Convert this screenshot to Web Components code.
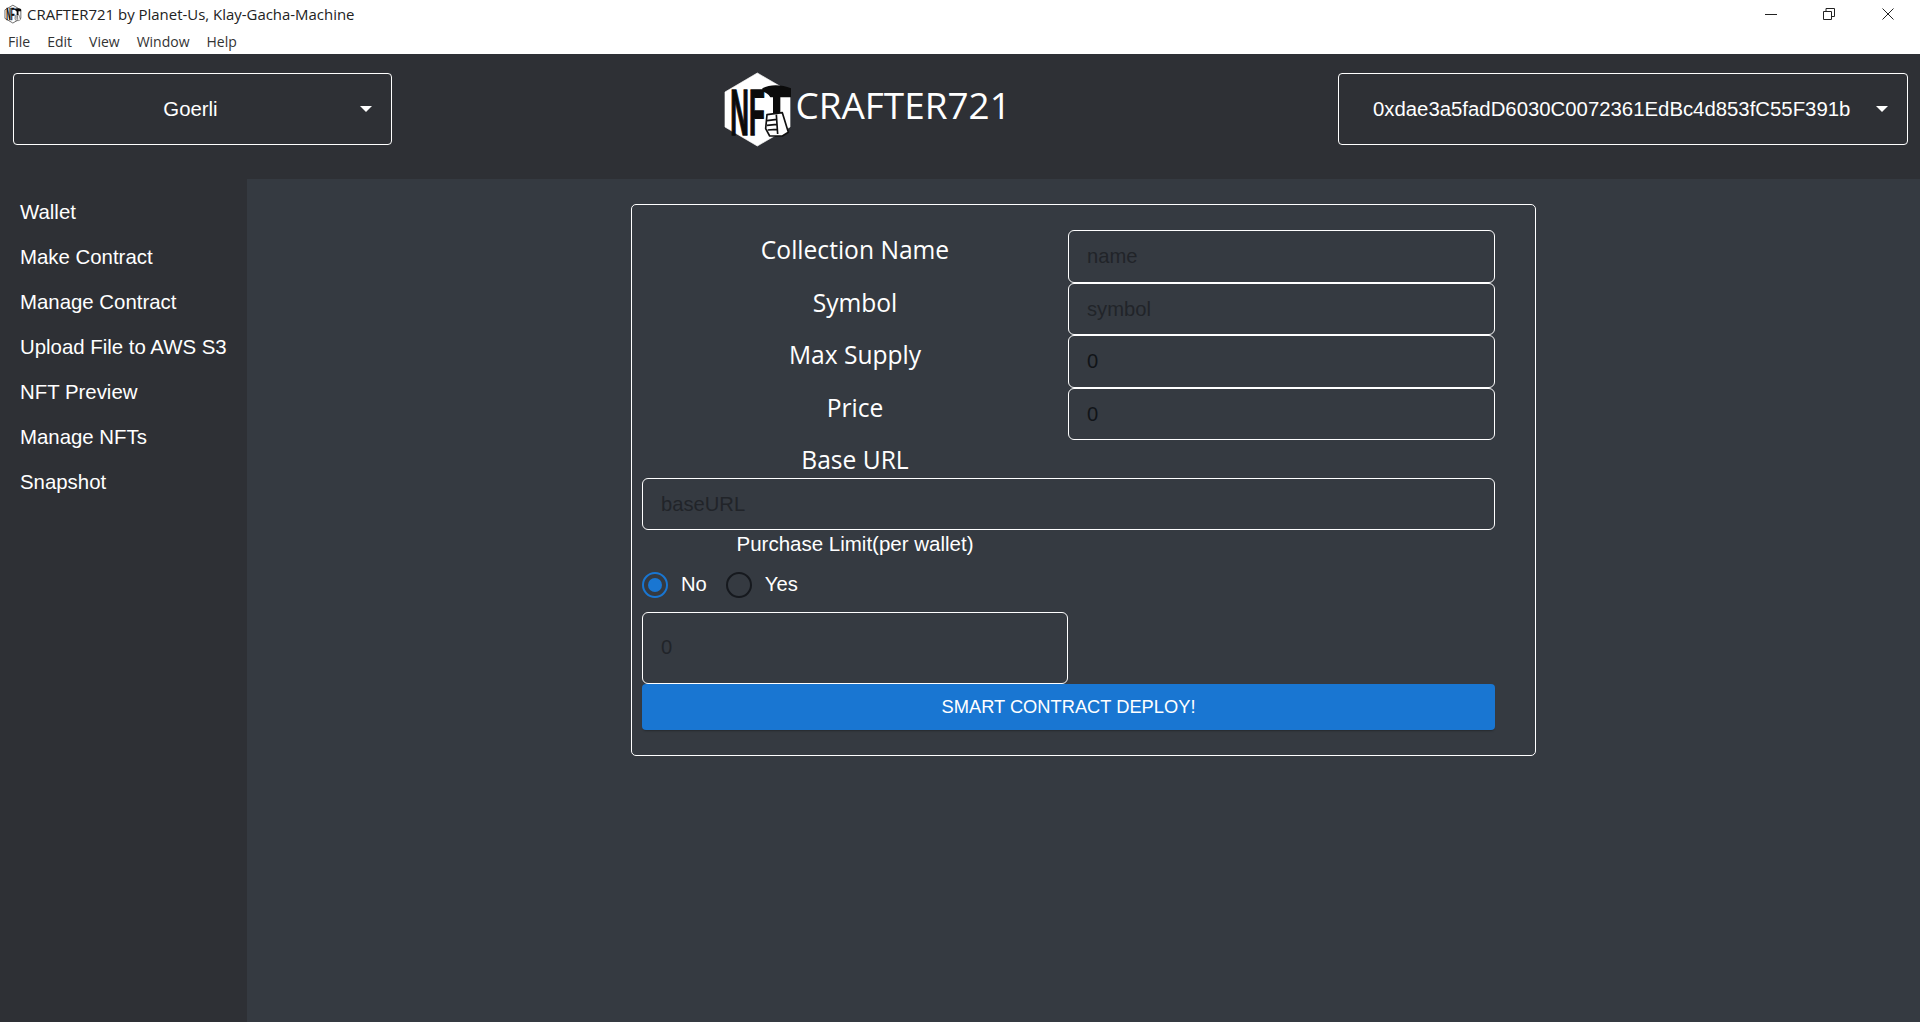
<!DOCTYPE html>
<html lang="en"><head><meta charset="utf-8"><title>CRAFTER721</title>
<style>
html,body{margin:0;height:100%;background:#353a41;overflow:hidden}
body{font-family:"Liberation Sans",Arial,sans-serif}
</style></head><body>
<crafter-app></crafter-app>
<script>
const logoSvg = (hexFill, hexStroke, sw) => `
<svg viewBox="0 0 270 270" width="100%" height="100%" xmlns="http://www.w3.org/2000/svg">
<polygon points="121,27 219,84 219,189 121,246 24,189 24,84" fill="${hexFill}" stroke="${hexStroke}" stroke-width="${sw}" stroke-linejoin="round"/>
<text transform="translate(40 213) scale(0.4 1)" font-family="Liberation Sans" font-weight="700" font-size="194" fill="#0b0b0b" stroke="#0b0b0b" stroke-width="5">NF</text>
<path d="M136 73 C160 60 195 62 222 73 L222 100 L190 100 L190 150 L168 150 L168 100 L160 100 C154 90 146 84 136 84Z" fill="#0b0b0b"/>
<path d="M150 152 L196 146 L214 205 L196 216 L158 216 L146 194Z" fill="#fff" stroke="#111" stroke-width="5" stroke-linejoin="round"/>
<path d="M150 170 L180 166M150 184 L180 181M152 198 L180 196M178 152 L182 210" stroke="#111" stroke-width="5" fill="none"/>
</svg>`;

class CrafterTitlebar extends HTMLElement{constructor(){super();this.attachShadow({mode:'open'}).innerHTML=`
<style>
:host{display:block;height:54px;background:#fff;color:#222;font-family:"Open Sans","Noto Sans",sans-serif}
.top{display:flex;align-items:center;height:28px;padding-left:3px}
.ico{width:22px;height:22px;flex:none;margin-right:2px}
.t{font-size:14.95px;white-space:nowrap;flex:1}
.ctl{display:flex;height:28px;flex:none;margin-right:3px}
.ctl span{display:flex;width:58.5px;align-items:center;justify-content:center}
.menu{display:flex;height:26px;align-items:center;padding-left:8px;font-size:14px;color:#333;gap:17px}
svg{display:block}
</style>
<div class="top"><span class="ico">${logoSvg('#fff','#222',8)}</span><span class="t"><slot></slot></span>
<div class="ctl">
<span><svg width="12" height="12" viewBox="0 0 12 12"><path d="M0 6.5H12" stroke="#222" stroke-width="1"/></svg></span>
<span><svg width="12" height="12" viewBox="0 0 12 12"><path d="M.5 3.5h8v8h-8zM3 3.5V.5h8.5v8H8.5" stroke="#222" fill="none"/></svg></span>
<span><svg width="12" height="12" viewBox="0 0 12 12"><path d="M.5.5l11 11M11.5.5l-11 11" stroke="#222" fill="none"/></svg></span>
</div></div>
<div class="menu"><span>File</span><span>Edit</span><span>View</span><span>Window</span><span>Help</span></div>`}}
customElements.define('crafter-titlebar',CrafterTitlebar);

class CrafterSelect extends HTMLElement{constructor(){super();this.attachShadow({mode:'open'}).innerHTML=`
<style>
:host{display:flex;box-sizing:border-box;height:72px;border:1px solid #fff;border-radius:4px;align-items:center;color:#fff;font-size:20.35px;padding:0 19px 0 34px}
.v{flex:1;text-align:center;white-space:nowrap;min-width:0}
.a{width:0;height:0;flex:none;border-left:6px solid transparent;border-right:6px solid transparent;border-top:6px solid #fff;margin-left:27px}
</style><div class="v"><slot></slot></div><i class="a"></i>`}}
customElements.define('crafter-select',CrafterSelect);

class CrafterLogo extends HTMLElement{constructor(){super();this.attachShadow({mode:'open'}).innerHTML=`
<style>
:host{display:flex;align-items:flex-start;color:#fff}
.m{width:90px;height:90px;flex:none;margin-top:10px;margin-right:-11.5px}
.t{font:36.9px/1 "Open Sans","Noto Sans",sans-serif;padding-top:33px;white-space:nowrap}
</style><span class="m">${logoSvg('#fff','#fff',2)}</span><span class="t"><slot></slot></span>`}}
customElements.define('crafter-logo',CrafterLogo);

class CrafterHeader extends HTMLElement{constructor(){super();this.attachShadow({mode:'open'}).innerHTML=`
<style>
:host{display:flex;height:125px;flex:none;background:#2e3035;box-sizing:border-box}
.l{width:379px;margin:19px 0 0 13px}.c{margin-left:325px}.r{width:570px;margin:19px 12px 0 auto}
</style>
<div class="l"><crafter-select>Goerli</crafter-select></div>
<div class="c"><crafter-logo>CRAFTER721</crafter-logo></div>
<div class="r"><crafter-select>0xdae3a5fadD6030C0072361EdBc4d853fC55F391b</crafter-select></div>`}}
customElements.define('crafter-header',CrafterHeader);

class CrafterNav extends HTMLElement{constructor(){super();this.attachShadow({mode:'open'}).innerHTML=`
<style>
:host{display:block;width:247px;flex:none;box-sizing:border-box;background:#2e3035;padding-top:11px}
::slotted(a){display:block;height:45px;line-height:45px;padding-left:20px;font-size:20.4px;color:#fff;white-space:nowrap;text-decoration:none}
</style><slot></slot>`}}
customElements.define('crafter-nav',CrafterNav);

class CrafterField extends HTMLElement{constructor(){super();this.attachShadow({mode:'open'}).innerHTML=`
<style>
:host{display:flex;box-sizing:border-box;align-items:center;border:1px solid #fff;border-radius:6px;padding:1px 0 0 18px;font-size:20.2px;color:#212429;background:#353a41}
:host([value]){color:#111418}
:host([tall]){padding:0 0 2px 18px;color:#212429}
</style><slot></slot>`}}
customElements.define('crafter-field',CrafterField);

class CrafterRadio extends HTMLElement{constructor(){super();this.attachShadow({mode:'open'}).innerHTML=`
<style>
:host{display:inline-flex;align-items:center;color:#fff;font-size:20.2px}
.o{box-sizing:border-box;width:26px;height:26px;border-radius:50%;border:2.5px solid #16191e;display:flex;align-items:center;justify-content:center;margin-right:13px}
:host([checked]) .o{border-color:#1976d2}
:host([checked]) .o::after{content:"";width:14px;height:14px;border-radius:50%;background:#1976d2}
</style><span class="o"></span><slot></slot>`}}
customElements.define('crafter-radio',CrafterRadio);

class CrafterForm extends HTMLElement{constructor(){super();this.attachShadow({mode:'open'}).innerHTML=`
<style>
:host{display:block;box-sizing:border-box;width:905px;border:1px solid #fff;border-radius:5px;padding:25px 39px 25px 10px;color:#fff}
.g{display:grid;grid-template-columns:426px 427px;grid-template-rows:repeat(4,52.5px) 38px 52px 30px 52px 72px 46px}
.lb{font:24.6px/40px "Open Sans","Noto Sans",sans-serif;text-align:center;white-space:nowrap}
.w{grid-column:1/3}
.pl{text-align:center;font-size:20.5px;line-height:28px;white-space:nowrap}
.rr{display:flex;align-items:center;gap:19px;grid-column:1/3;padding:0 0 3px;box-sizing:border-box}
button{grid-column:1/3;border:0;border-radius:4px;background:#1976d2;color:#fff;font:18.3px "Liberation Sans",sans-serif;box-shadow:0 2px 2px -1px rgba(0,0,0,.3);padding:0;margin:0}
</style>
<div class="g">
<div class="lb">Collection Name</div><crafter-field>name</crafter-field>
<div class="lb">Symbol</div><crafter-field>symbol</crafter-field>
<div class="lb">Max Supply</div><crafter-field value>0</crafter-field>
<div class="lb">Price</div><crafter-field value>0</crafter-field>
<div class="lb" style="height:38px">Base URL</div><div></div>
<crafter-field class="w">baseURL</crafter-field>
<div class="pl">Purchase Limit(per wallet)</div><div></div>
<div class="rr"><crafter-radio checked>No</crafter-radio><crafter-radio>Yes</crafter-radio></div>
<crafter-field tall>0</crafter-field><div></div>
<button>SMART CONTRACT DEPLOY!</button>
</div>`}}
customElements.define('crafter-form',CrafterForm);

class CrafterApp extends HTMLElement{constructor(){super();this.attachShadow({mode:'open'}).innerHTML=`
<style>
:host{display:flex;flex-direction:column;height:1022px;overflow:hidden;background:#353a41;font-family:"Liberation Sans",sans-serif}
.b{display:flex;flex:1;min-height:0}
main{flex:1;display:flex;justify-content:center;align-items:flex-start;padding-top:25px}
</style>
<crafter-titlebar>CRAFTER721 by Planet-Us, Klay-Gacha-Machine</crafter-titlebar>
<crafter-header></crafter-header>
<div class="b"><crafter-nav>
<a>Wallet</a><a>Make Contract</a><a>Manage Contract</a><a>Upload File to AWS S3</a><a>NFT Preview</a><a>Manage NFTs</a><a>Snapshot</a>
</crafter-nav><main><crafter-form></crafter-form></main></div>`}}
customElements.define('crafter-app',CrafterApp);
</script></body></html>
